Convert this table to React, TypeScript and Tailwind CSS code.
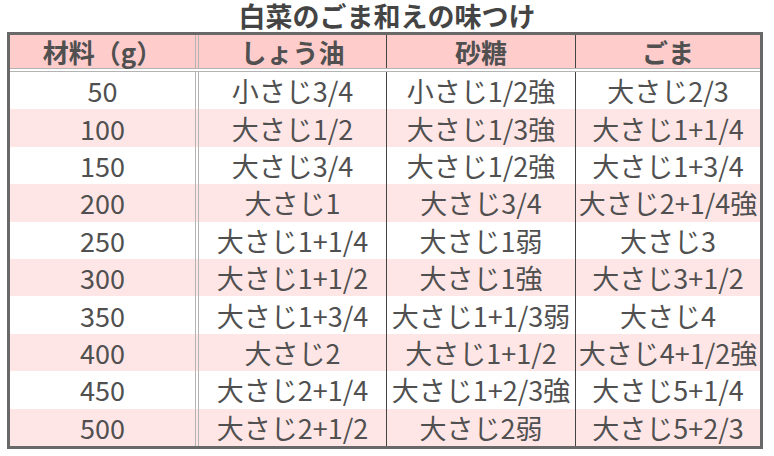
const rows: [string, string, string, string][] = [
  ["50", "小さじ3/4", "小さじ1/2強", "大さじ2/3"],
  ["100", "大さじ1/2", "大さじ1/3強", "大さじ1+1/4"],
  ["150", "大さじ3/4", "大さじ1/2強", "大さじ1+3/4"],
  ["200", "大さじ1", "大さじ3/4", "大さじ2+1/4強"],
  ["250", "大さじ1+1/4", "大さじ1弱", "大さじ3"],
  ["300", "大さじ1+1/2", "大さじ1強", "大さじ3+1/2"],
  ["350", "大さじ1+3/4", "大さじ1+1/3弱", "大さじ4"],
  ["400", "大さじ2", "大さじ1+1/2", "大さじ4+1/2強"],
  ["450", "大さじ2+1/4", "大さじ1+2/3強", "大さじ5+1/4"],
  ["500", "大さじ2+1/2", "大さじ2弱", "大さじ5+2/3"],
];

const font = { fontFamily: '"Noto Sans CJK JP", "Noto Sans", sans-serif' };

function Row({ cells, bg, header }: { cells: string[]; bg: string; header?: boolean }) {
  const h = header ? "h-[33px] font-bold text-[26px]" : "h-[37.4px] text-[27px]";
  const cell = "flex items-center justify-center whitespace-nowrap";
  return (
    <div className={`flex ${h} ${bg}`}>
      <div className={`${cell} w-[189px] border-r-4 border-double border-[#b4b4b4]`}>{cells[0]}</div>
      <div className={`${cell} w-[188px] border-r border-[#444]`}>{cells[1]}</div>
      <div className={`${cell} w-[189px] border-r border-[#444]`}>{cells[2]}</div>
      <div className={`${cell} flex-1`}>{cells[3]}</div>
    </div>
  );
}

export default function App() {
  return (
    <div className="w-[774px] h-[456px] bg-white text-[#505050]" style={font}>
      <div className="h-[32px] text-center text-[27px] font-bold text-[#444] leading-[32px]">
        白菜のごま和えの味つけ
      </div>
      <div className="ml-[7px] w-[756px] border-[3px] border-[#686868] leading-none">
        <div className="border-b-4 border-double border-[#b4b4b4]">
          <Row header bg="bg-[#ffcccc]" cells={["材料（g）", "しょう油", "砂糖", "ごま"]} />
        </div>
        {rows.map((r, i) => (
          <Row key={r[0]} cells={r} bg={i % 2 === 0 ? "bg-white" : "bg-[#ffe6e6]"} />
        ))}
      </div>
    </div>
  );
}
